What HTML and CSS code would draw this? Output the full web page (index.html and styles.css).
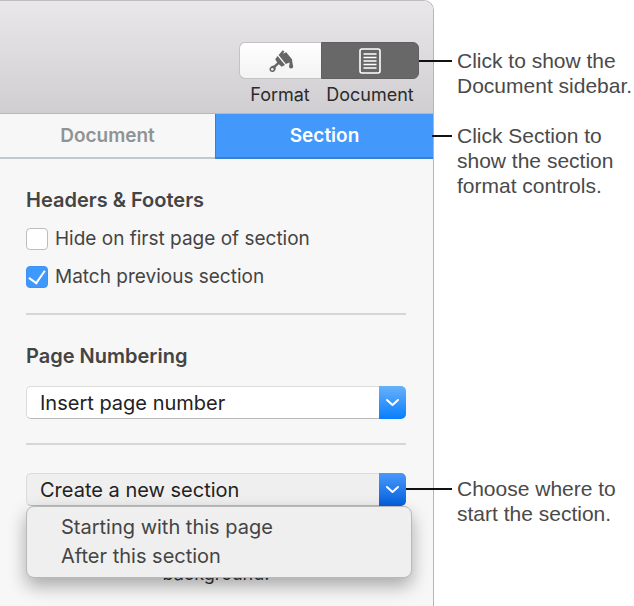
FILE: index.html
```
<!DOCTYPE html>
<html lang="en">
<head>
<meta charset="utf-8">
<title>Section sidebar</title>
<link rel="stylesheet" href="styles.css">
</head>
<body>
<div class="figure">
  <main class="panel">
    <header class="toolbar">
      <div class="tool">
        <button class="tool-button" id="format" type="button" aria-labelledby="format-label">
          <svg width="26" height="26" viewBox="0 0 26 26" aria-hidden="true">
            <path fill="#666" d="M14.800 2.200 16.400 3.400 14.800 5.800 18.200 4.200 24 11.200C24.200 14 24.800 16 25.200 18.400A2.100 2.100 0 0 1 21 18.400C21.200 16.800 21.800 15.800 21.400 14.400L17.800 16 10.600 6.900Z"/>
            <path fill="#666" d="M9.600 7.900 17 17 13.600 18.800 10.900 16.200 7.600 19.200C8.200 21.800 6.600 24 4.200 24 1.600 24 .8 21.400 2.100 19.600 3 18.200 4.600 17.900 6 17.600L9.200 14.400 7.200 11.200Z"/>
            <circle cx="4.300" cy="21.200" r="1.200" fill="#f7f7f7"/>
          </svg>
        </button>
        <span class="tool-label" id="format-label">Format</span>
      </div>
      <div class="tool tool-wide">
        <button class="tool-button tool-active" type="button" aria-pressed="true" aria-labelledby="document-label">
          <svg width="22" height="26" viewBox="0 0 22 26" fill="none" stroke="#fff" aria-hidden="true">
            <rect x="1" y="1" width="20" height="24" rx="2" stroke-width="1.6"/>
            <path stroke-width="1.5" d="M4.500 6h13M4.500 9.500h13M4.500 13h13M4.500 16.500h13M4.500 20h13"/>
          </svg>
        </button>
        <span class="tool-label" id="document-label">Document</span>
      </div>
    </header>
    <nav class="tabs">
      <button class="tab" type="button">Document</button>
      <button class="tab tab-active" type="button">Section</button>
    </nav>
    <div class="content">
      <section class="group">
        <h2>Headers &amp; Footers</h2>
        <label class="check"><input type="checkbox">Hide on first page of section</label>
        <label class="check"><input type="checkbox" checked>Match previous section</label>
      </section>
      <section class="group">
        <h2>Page Numbering</h2>
        <div class="combo">
          <select aria-label="Page number"><option>Insert page number</option></select>
          <svg class="chevron" viewBox="0 0 27 33" aria-hidden="true"><path d="M8 14l5.500 5 5.500-5"/></svg>
        </div>
      </section>
      <section class="group">
        <div class="combo combo-open">
          <select aria-label="New section"><option>Create a new section</option></select>
          <svg class="chevron" viewBox="0 0 27 33" aria-hidden="true"><path d="M8 14l5.500 5 5.500-5"/></svg>
          <ul class="menu">
            <li><button type="button">Starting with this page</button></li>
            <li><button type="button">After this section</button></li>
          </ul>
        </div>
        <p class="note">background.</p>
      </section>
    </div>
  </main>
  <aside class="callouts">
    <p class="callout callout-toolbar">Click to show the<br>Document sidebar.</p>
    <p class="callout callout-tab">Click Section to<br>show the section<br>format controls.</p>
    <p class="callout callout-menu">Choose where to<br>start the section.</p>
  </aside>
</div>
</body>
</html>
```
FILE: styles.css
```
* {
  box-sizing: border-box;
}

body {
  margin: 0;
  background: #fff;
  color: #444;
  font: 19px/24px Inter, "Liberation Sans", sans-serif;
}

button,
select {
  margin: 0;
  border: 0;
  padding: 0;
  background: none;
  color: inherit;
  font: inherit;
}

h2,
p,
ul {
  margin: 0;
  padding: 0;
}

.figure {
  display: grid;
  grid-template-columns: minmax(0, 1fr) 200px;
  min-height: 100vh;
}

.panel {
  overflow: hidden;
  border-top: 1px solid #bfbfbf;
  border-right: 1px solid #b5b5b5;
  border-top-right-radius: 10px;
  background: #f7f7f7;
}

.toolbar {
  display: flex;
  justify-content: flex-end;
  border-bottom: 1px solid #b8b6b8;
  padding: 41px 14px 6px 0;
  background: linear-gradient(#e9e7e9, #d0ced0);
}

.tool {
  display: flex;
  flex-direction: column;
  align-items: center;
  gap: 4px;
  width: 82px;
}

.tool-wide {
  width: 98px;
}

.tool-button {
  display: flex;
  align-items: center;
  justify-content: center;
  width: 100%;
  height: 37px;
  border: 1px solid #c4c2c4;
  border-right: 0;
  border-radius: 6px 0 0 6px;
  background: linear-gradient(#fff, #f3f3f3);
}

.tool-active {
  border: 1px solid #606060;
  border-radius: 0 6px 6px 0;
  background: #686868;
}

.tool-label {
  color: #2b2b2b;
  font-size: 18px;
}

.tabs {
  display: grid;
  grid-template-columns: 215px 1fr;
}

.tab {
  height: 45px;
  border-bottom: 2px solid #c0c9cf;
  color: #909394;
  font-weight: 600;
}

.tab-active {
  border-bottom-color: #3a7fd0;
  border-left: 1px solid #3a7fd0;
  background: #4398fb;
  color: #fff;
}

.content {
  padding: 0 27px 0 26px;
}

.group {
  padding: 28px 0 24px;
}

.group + .group {
  border-top: 2px solid #d6d6d6;
}

h2 {
  margin-bottom: 14px;
  font-size: 20px;
  font-weight: 600;
  line-height: 26px;
}

h2 + .combo {
  margin-top: 17px;
}

.check {
  display: flex;
  align-items: center;
  gap: 7px;
}

.check + .check {
  margin-top: 14px;
}

.check input {
  appearance: none;
  width: 22px;
  height: 22px;
  margin: 0;
  border: 1px solid #bdbdbd;
  border-radius: 4px;
  background: #fff;
}

.check input:checked {
  display: grid;
  place-items: center;
  border-color: #3b92f8;
  background: #3f99fd;
}

.check input:checked::after {
  content: "";
  width: 8px;
  height: 14px;
  border: solid #fff;
  border-width: 0 2px 2px 0;
  transform: translateY(-2px) rotate(35deg);
}

.combo {
  position: relative;
  display: flex;
  height: 33px;
}

.combo select {
  appearance: none;
  flex: 1;
  min-width: 0;
  border: 1px solid #dcdcdc;
  border-bottom-color: #b9b9b9;
  border-right: 0;
  border-radius: 5px 0 0 5px;
  padding: 0 13px;
  background: #fff;
  color: #222;
  font-size: 20px;
}

.combo-open select {
  background: #efefef;
}

.chevron {
  width: 27px;
  height: 33px;
  border-radius: 0 5px 5px 0;
  background: linear-gradient(#68b1fb, #087dfd);
  fill: none;
  stroke: #fff;
  stroke-width: 2;
  stroke-linecap: round;
  stroke-linejoin: round;
}

.combo-open .chevron {
  background: linear-gradient(#4a98fb, #0460dc);
}

.menu {
  position: absolute;
  top: 100%;
  right: -6px;
  left: 0;
  border: 1px solid #b9b9b9;
  border-radius: 8px;
  padding: 6px 0 6px 34px;
  background: #efefef;
  box-shadow: 0 8px 18px rgba(0, 0, 0, 0.32);
  font-size: 20px;
  line-height: 29px;
  list-style: none;
}

.menu button {
  display: block;
}

.note {
  margin-top: 56px;
  color: #333;
  font-size: 18px;
  text-align: center;
}

.callouts {
  display: flex;
  flex-direction: column;
  padding: 48px 0 0 23px;
  color: #4a4a4a;
  font: 21px/25px "Liberation Sans", sans-serif;
  white-space: nowrap;
}

.callout {
  position: relative;
}

.callout::before {
  content: "";
  position: absolute;
  top: 12px;
  right: calc(100% + 5px);
  height: 2px;
  background: #111;
}

.callout-toolbar::before {
  width: 33px;
}

.callout-tab {
  margin-top: 25px;
}

.callout-tab::before {
  width: 20px;
}

.callout-menu {
  margin-top: 278px;
}

.callout-menu::before {
  width: 46px;
}
```
